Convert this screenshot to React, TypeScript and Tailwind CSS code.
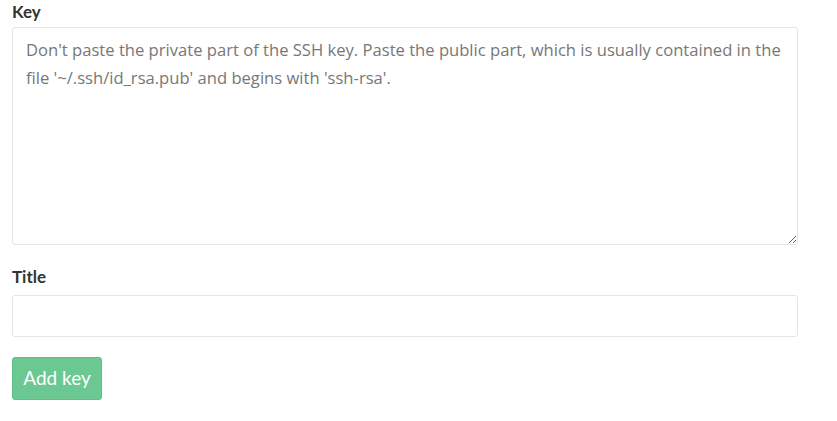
export default function App() {
  return (
    <div className="min-h-screen bg-white px-3" style={{ fontFamily: "Lato, 'Open Sans', sans-serif" }}>
      <form className="w-[786px]" onSubmit={(e) => e.preventDefault()}>
        <label className="block text-[17px] font-bold leading-[24px] text-[#333333]">Key</label>
        <textarea
          className="mt-[3px] block h-[218px] w-full rounded-[3px] border border-[#e5e5e5] px-[13px] py-[8px] text-[16.6px] leading-[28px] text-[#555555] placeholder:text-[#777777] outline-none"
          style={{ fontFamily: "'Open Sans', sans-serif" }}
          placeholder="Don't paste the private part of the SSH key. Paste the public part, which is usually contained in the file '~/.ssh/id_rsa.pub' and begins with 'ssh-rsa'."
        />
        <label className="mt-[20px] block text-[17px] font-bold leading-[24px] text-[#333333]">Title</label>
        <input
          type="text"
          className="mt-[6px] block h-[42px] w-full rounded-[3px] border border-[#e5e5e5] px-[13px] text-[17px] text-[#555555] outline-none"
        />
        <button
          type="submit"
          className="mt-[20px] h-[43px] w-[90px] rounded-[3px] border border-[#5dbf88] bg-[#6bc893] text-[19px] text-white"
        >
          Add key
        </button>
      </form>
    </div>
  );
}
